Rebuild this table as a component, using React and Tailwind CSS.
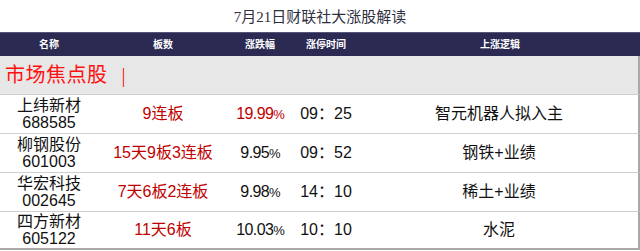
import React from "react";

const rows = [
  { name: "上纬新材", code: "688585", boards: "9连板", pct: "19.99", pctRed: true, time: "09：25", logic: "智元机器人拟入主" },
  { name: "柳钢股份", code: "601003", boards: "15天9板3连板", pct: "9.95", pctRed: false, time: "09：52", logic: "钢铁+业绩" },
  { name: "华宏科技", code: "002645", boards: "7天6板2连板", pct: "9.98", pctRed: false, time: "14：10", logic: "稀土+业绩" },
  { name: "四方新材", code: "605122", boards: "11天6板", pct: "10.03", pctRed: false, time: "10：10", logic: "水泥" },
];

const sans = { fontFamily: '"Liberation Sans", "Noto Sans CJK SC", sans-serif' };
const serif = { fontFamily: '"Liberation Serif", "Noto Sans CJK SC", serif' };

export default function App() {
  return (
    <div className="w-[640px] h-[251px] bg-white overflow-hidden" style={sans}>
      <div className="h-[32px] flex items-center justify-center text-[15px] text-[#2f2f3f] pt-[2px]" style={serif}>
        7月21日财联社大涨股解读
      </div>
      <div className="h-[24px] bg-[#2b2a52] border-t border-[#57567a] grid grid-cols-[98px_130px_64px_68px_1fr] items-center text-white text-[10px] font-bold">
        <div className="text-center">名称</div>
        <div className="text-center">板数</div>
        <div className="text-center">涨跌幅</div>
        <div className="text-center">涨停时间</div>
        <div className="text-center">上涨逻辑</div>
      </div>
      <div className="h-[38px] bg-[#e7e7e7] border-r-2 border-[#a8a8a8] flex items-center pl-[5px] text-[20px] text-[#ff1010]" style={serif}>
        <span className="tracking-[0.5px]">市场焦点股</span>
        <span className="ml-[14px]">|</span>
      </div>
      {rows.map((r, i) => (
        <div
          key={r.code}
          className={
            "h-[39px] grid grid-cols-[98px_130px_64px_68px_1fr] items-center border-t border-[#cfcfcf] border-r-2 border-r-[#a8a8a8] text-[16px] text-[#111]" +
            (i === rows.length - 1 ? " border-b-2 border-b-[#a8a8a8]" : "")
          }
        >
          <div className="flex flex-col items-center leading-[17px]">
            <span>{r.name}</span>
            <span>{r.code}</span>
          </div>
          <div className="text-center text-[#c00000]">{r.boards}</div>
          <div className={"text-center text-[16px] tracking-[-0.6px] " + (r.pctRed ? "text-[#c00000]" : "text-[#111]")}>
            {r.pct}
            <span className="text-[13px] tracking-[-1px]">%</span>
          </div>
          <div className="text-center">{r.time}</div>
          <div className="text-center">{r.logic}</div>
        </div>
      ))}
    </div>
  );
}
